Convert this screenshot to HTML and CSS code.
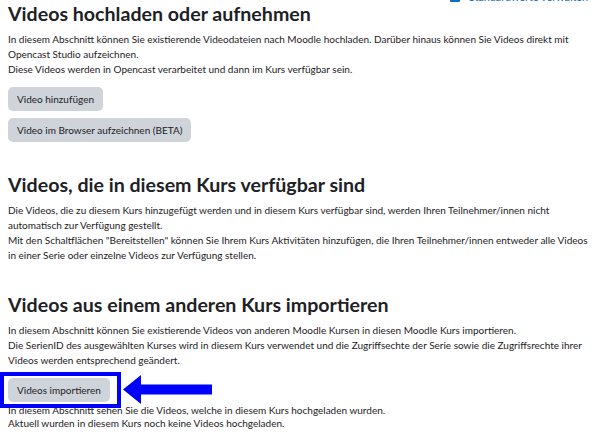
FILE: index.html
```html
<!DOCTYPE html>
<html lang="de">
<head>
<meta charset="utf-8">
<title>Opencast Videos</title>
<link rel="stylesheet" href="styles.css">
</head>
<body>
<div class="page">
  <div class="topbar">
    <a class="toplink" href="#"><span class="topicon"></span>Standardwerte verwalten</a>
  </div>

  <section class="block">
    <h2 class="title">Videos hochladen oder aufnehmen</h2>
    <p class="text">In diesem Abschnitt können Sie existierende Videodateien nach Moodle hochladen. Darüber hinaus können Sie Videos direkt mit Opencast Studio aufzeichnen.<br>Diese Videos werden in Opencast verarbeitet und dann im Kurs verfügbar sein.</p>
    <div class="buttons">
      <button class="btn">Video hinzufügen</button>
      <button class="btn">Video im Browser aufzeichnen (BETA)</button>
    </div>
  </section>

  <section class="block">
    <h2 class="title">Videos, die in diesem Kurs verfügbar sind</h2>
    <p class="text">Die Videos, die zu diesem Kurs hinzugefügt werden und in diesem Kurs verfügbar sind, werden Ihren Teilnehmer/innen nicht automatisch zur Verfügung gestellt.<br>Mit den Schaltflächen "Bereitstellen" können Sie Ihrem Kurs Aktivitäten hinzufügen, die Ihren Teilnehmer/innen entweder alle Videos in einer Serie oder einzelne Videos zur Verfügung stellen.</p>
  </section>

  <section class="block">
    <h2 class="title">Videos aus einem anderen Kurs importieren</h2>
    <p class="text">In diesem Abschnitt können Sie existierende Videos von anderen Moodle Kursen in diesen Moodle Kurs importieren.<br>Die SerienID des ausgewählten Kurses wird in diesem Kurs verwendet und die Zugriffsechte der Serie sowie die Zugriffsrechte ihrer Videos werden entsprechend geändert.</p>
    <div class="import-row">
      <div class="marked">
        <button class="btn">Videos importieren</button>
        <span class="highlight" aria-hidden="true"></span>
        <svg class="arrow" width="89" height="29" viewBox="0 0 89 29" aria-hidden="true">
          <polygon points="0,14.5 18,0 18,9.5 89,9.5 89,19.5 18,19.5 18,29" fill="#0000ff"/>
        </svg>
      </div>
    </div>
    <p class="text after">In diesem Abschnitt sehen Sie die Videos, welche in diesem Kurs hochgeladen wurden.<br>Aktuell wurden in diesem Kurs noch keine Videos hochgeladen.</p>
  </section>
</div>
</body>
</html>
```

FILE: styles.css
```css
html, body {
  margin: 0;
  padding: 0;
  background: #ffffff;
}
body {
  font-family: Lato, "Open Sans", sans-serif;
  color: #1d2125;
  overflow: hidden;
}
.page {
  padding: 0 8px;
}
.topbar {
  display: flex;
  justify-content: flex-end;
  height: 10px;
  margin-top: -8px;
  margin-bottom: 0;
  padding-right: 6px;
}
.toplink {
  display: flex;
  align-items: center;
  gap: 9px;
  color: #0f6cbf;
  text-decoration: none;
  font-size: 10.8px;
  line-height: 10px;
}
.topicon {
  width: 10px;
  height: 10px;
  background: #0f6cbf;
  border-radius: 1px;
}
.block {
  margin-bottom: 31px;
}
.block + .block {
  margin-bottom: 30px;
}
.title {
  margin: 0 0 6px;
  font-size: 19.6px;
  line-height: 24px;
  font-weight: 700;
}
.text {
  margin: 0;
  font-size: 10px;
  line-height: 15px;
}
.buttons {
  display: flex;
  flex-direction: column;
  align-items: flex-start;
  gap: 7px;
  margin-top: 10px;
}
.btn {
  font-family: inherit;
  font-size: 10px;
  line-height: 14px;
  color: #1d2125;
  background: #ced4da;
  border: none;
  border-radius: 5px;
  padding: 5px 9px;
}
.import-row {
  display: flex;
  margin-top: 10px;
}
.marked {
  position: relative;
  display: flex;
}
.highlight {
  position: absolute;
  top: -6px;
  left: -8px;
  right: -11px;
  bottom: -6px;
  border: 4px solid #0000ff;
}
.arrow {
  position: absolute;
  left: calc(100% + 13px);
  top: 50%;
  margin-top: -15px;
  display: block;
}
.text.after {
  margin-top: 2px;
  line-height: 13px;
}
```
